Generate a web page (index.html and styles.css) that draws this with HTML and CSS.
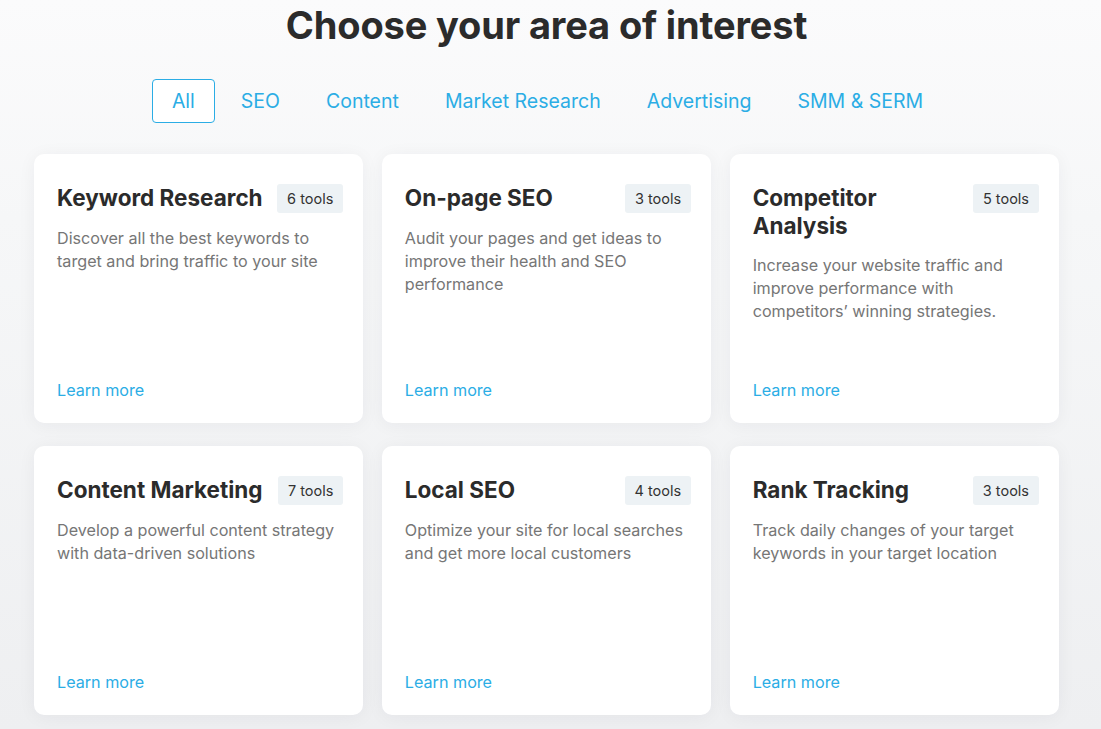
FILE: index.html
```html
<!DOCTYPE html>
<html lang="en">
<head>
<meta charset="utf-8">
<title>Choose your area of interest</title>
<link rel="stylesheet" href="styles.css">
</head>
<body>
<main class="section">
  <h1 class="heading">Choose your area of interest</h1>
  <nav class="tabs">
    <a class="tab tab-active">All</a>
    <a class="tab">SEO</a>
    <a class="tab">Content</a>
    <a class="tab">Market Research</a>
    <a class="tab">Advertising</a>
    <a class="tab">SMM &amp; SERM</a>
  </nav>
  <div class="grid">
    <article class="card">
      <div class="card-head"><h2 class="card-title">Keyword Research</h2><span class="badge">6 tools</span></div>
      <p class="card-text">Discover all the best keywords to target and bring traffic to your site</p>
      <a class="card-link">Learn more</a>
    </article>
    <article class="card">
      <div class="card-head"><h2 class="card-title">On-page SEO</h2><span class="badge">3 tools</span></div>
      <p class="card-text">Audit your pages and get ideas to improve their health and SEO performance</p>
      <a class="card-link">Learn more</a>
    </article>
    <article class="card">
      <div class="card-head"><h2 class="card-title">Competitor Analysis</h2><span class="badge">5 tools</span></div>
      <p class="card-text">Increase your website traffic and improve performance with competitors’ winning strategies.</p>
      <a class="card-link">Learn more</a>
    </article>
    <article class="card">
      <div class="card-head"><h2 class="card-title">Content Marketing</h2><span class="badge">7 tools</span></div>
      <p class="card-text">Develop a powerful content strategy with data-driven solutions</p>
      <a class="card-link">Learn more</a>
    </article>
    <article class="card">
      <div class="card-head"><h2 class="card-title">Local SEO</h2><span class="badge">4 tools</span></div>
      <p class="card-text">Optimize your site for local searches and get more local customers</p>
      <a class="card-link">Learn more</a>
    </article>
    <article class="card">
      <div class="card-head"><h2 class="card-title">Rank Tracking</h2><span class="badge">3 tools</span></div>
      <p class="card-text">Track daily changes of your target keywords in your target location</p>
      <a class="card-link">Learn more</a>
    </article>
  </div>
</main>
</body>
</html>
```
FILE: styles.css
```css
* { box-sizing: border-box; }
html, body { margin: 0; padding: 0; }
body {
  font-family: Inter, "Noto Sans", "Liberation Sans", sans-serif;
  background: linear-gradient(180deg, #fbfbfc 0%, #f6f7f8 30%, #eeeff1 100%);
  min-height: 729px;
  color: #2a2a2a;
  overflow: hidden;
}
.section {
  width: 1025px;
  margin-left: 34px;
  padding-top: 2px;
}
.heading {
  margin: 0;
  text-align: center;
  font-size: 38px;
  line-height: 46px;
  font-weight: 700;
  color: #2b2b2b;
  letter-spacing: -0.15px;
}
.tabs {
  display: flex;
  justify-content: center;
  gap: 6px;
  margin-top: 31px;
  margin-left: 2px;
}
.tab {
  display: flex;
  align-items: center;
  height: 44px;
  padding: 0 19px;
  border: 1px solid transparent;
  border-radius: 4px;
  font-size: 19.5px;
  color: #2badE5;
  cursor: pointer;
}
.tab-active {
  border-color: #2badE5;
  background: #fff;
}
.grid {
  display: grid;
  grid-template-columns: repeat(3, 1fr);
  column-gap: 18.5px;
  row-gap: 23px;
  margin-top: 31px;
}
.card {
  height: 269px;
  background: #fff;
  border-radius: 10px;
  box-shadow: 0 2px 18px rgba(30, 40, 60, 0.05);
  padding: 30px 20px 21px 23px;
  display: flex;
  flex-direction: column;
}
.card-head {
  display: flex;
  justify-content: space-between;
  align-items: flex-start;
  gap: 12px;
}
.card-title {
  margin: 0;
  font-size: 22.5px;
  line-height: 28px;
  font-weight: 700;
  color: #2b2b2b;
}
.badge {
  flex: none;
  height: 29px;
  padding: 0 10px;
  display: flex;
  align-items: center;
  border-radius: 3px;
  background: #edf2f5;
  font-size: 14.5px;
  color: #333;
}
.card-text {
  margin: 14px 0 0;
  font-size: 16.15px;
  line-height: 23px;
  color: #767676;
}
.card-link {
  margin-top: auto;
  font-size: 16.15px;
  line-height: 23px;
  color: #2badE5;
  cursor: pointer;
}
```
